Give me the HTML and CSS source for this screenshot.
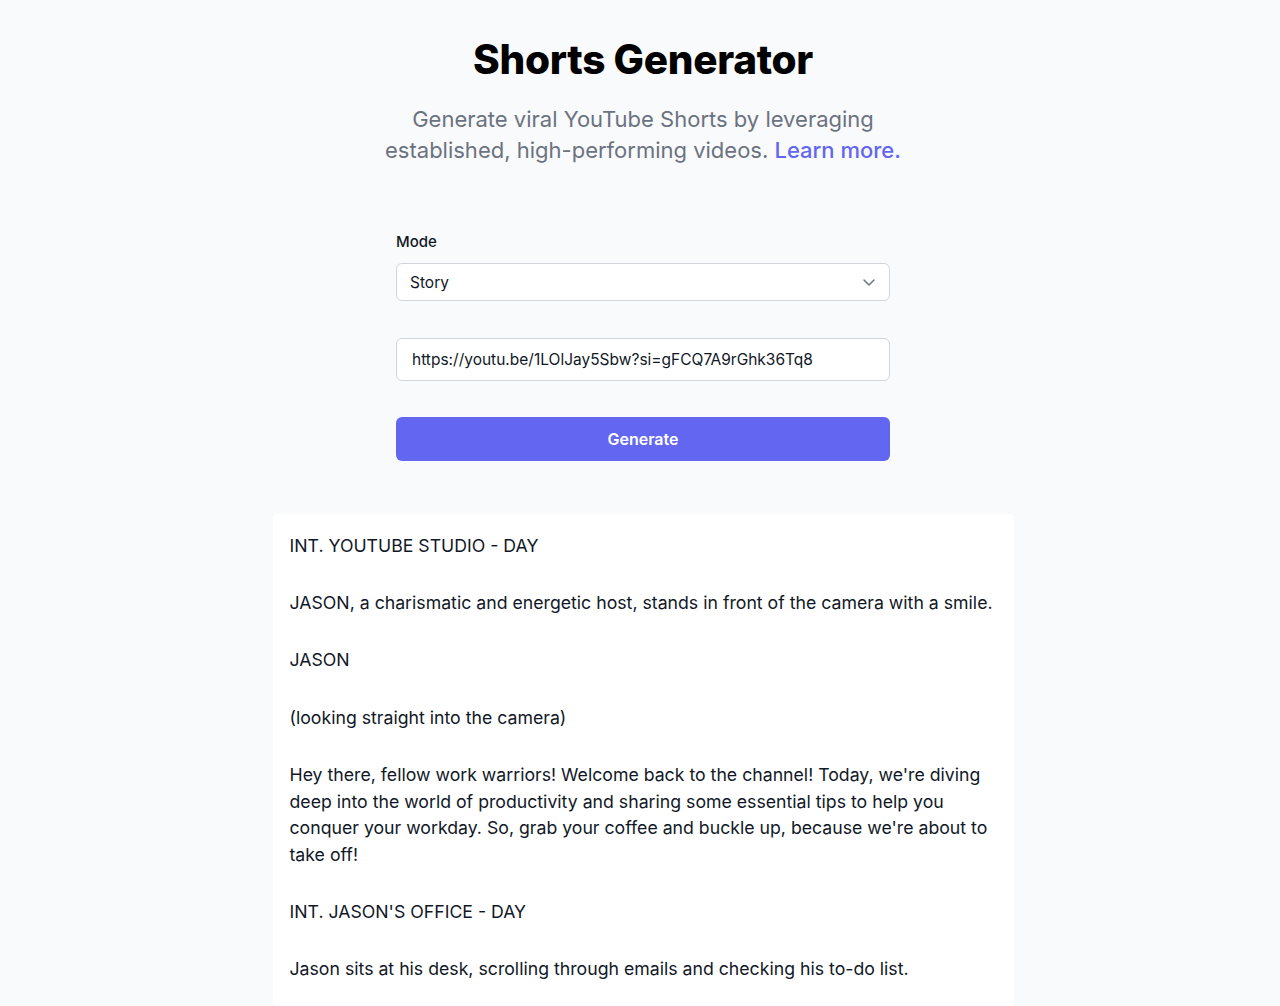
FILE: index.html
```html
<!DOCTYPE html>
<html lang="en">
<head>
<meta charset="utf-8">
<title>Shorts Generator</title>
<link rel="stylesheet" href="styles.css">
</head>
<body>
<main class="page">
  <header class="hero">
    <h1 class="title">Shorts Generator</h1>
    <p class="subtitle">Generate viral YouTube Shorts by leveraging established, high-performing videos. <a class="link" href="#">Learn more.</a></p>
  </header>
  <form class="form">
    <label class="label" for="mode">Mode</label>
    <div class="select">
      <span class="select-value">Story</span>
      <svg class="chevron" width="20" height="20" viewBox="0 0 20 20" fill="none"><path d="M5 8l5 5 5-5" stroke="#6b7280" stroke-width="1.5" stroke-linecap="round" stroke-linejoin="round"/></svg>
    </div>
    <div class="input">https://youtu.be/1LOlJay5Sbw?si=gFCQ7A9rGhk36Tq8</div>
    <button class="button" type="button">Generate</button>
  </form>
  <section class="card">
    <p>INT. YOUTUBE STUDIO - DAY</p>
    <p>JASON, a charismatic and energetic host, stands in front of the camera with a smile.</p>
    <p>JASON</p>
    <p>(looking straight into the camera)</p>
    <p>Hey there, fellow work warriors! Welcome back to the channel! Today, we're diving deep into the world of productivity and sharing some essential tips to help you conquer your workday. So, grab your coffee and buckle up, because we're about to take off!</p>
    <p>INT. JASON'S OFFICE - DAY</p>
    <p>Jason sits at his desk, scrolling through emails and checking his to-do list.</p>
  </section>
</main>
</body>
</html>
```

FILE: styles.css
```css
html, body {
  margin: 0;
  padding: 0;
  background: #f9fafb;
  font-family: Inter, "Noto Sans", sans-serif;
  color: #111827;
}

.page {
  display: flex;
  flex-direction: column;
  align-items: center;
  padding-left: 6px;
  height: 1006px;
  overflow: hidden;
}

.hero {
  text-align: center;
  padding-top: 36px;
  width: 560px;
}

.title {
  margin: 0;
  font-size: 40.5px;
  line-height: 48px;
  font-weight: 800;
  color: #000;
  letter-spacing: -0.3px;
}

.subtitle {
  margin: 20px 0 0;
  font-size: 22px;
  line-height: 31px;
  color: #6b7280;
}

.link {
  color: #6366f1;
  font-weight: 500;
  text-decoration: none;
}

.form {
  width: 494px;
  margin-top: 66px;
  display: flex;
  flex-direction: column;
}

.label {
  font-size: 15px;
  line-height: 20px;
  font-weight: 500;
  color: #111827;
}

.select {
  margin-top: 11px;
  height: 38px;
  box-sizing: border-box;
  border: 1px solid #d1d5db;
  border-radius: 6px;
  background: #fff;
  display: flex;
  align-items: center;
  justify-content: space-between;
  padding: 0 10px 0 13px;
  font-size: 15.5px;
}

.chevron {
  display: block;
}

.input {
  margin-top: 37px;
  height: 43px;
  box-sizing: border-box;
  border: 1px solid #d1d5db;
  border-radius: 6px;
  background: #fff;
  display: flex;
  align-items: center;
  padding: 0 15px;
  font-size: 15.5px;
}

.button {
  margin-top: 36px;
  height: 44px;
  border: none;
  border-radius: 6px;
  background: #6366f1;
  color: #fff;
  font-family: inherit;
  font-size: 16px;
  font-weight: 600;
}

.card {
  margin-top: 53px;
  width: 741px;
  box-sizing: border-box;
  background: #fff;
  border-radius: 4px;
  padding: 19px 17px 18px;
  font-size: 17.7px;
  line-height: 26.7px;
}

.card p {
  margin: 0 0 30.5px;
}
```
